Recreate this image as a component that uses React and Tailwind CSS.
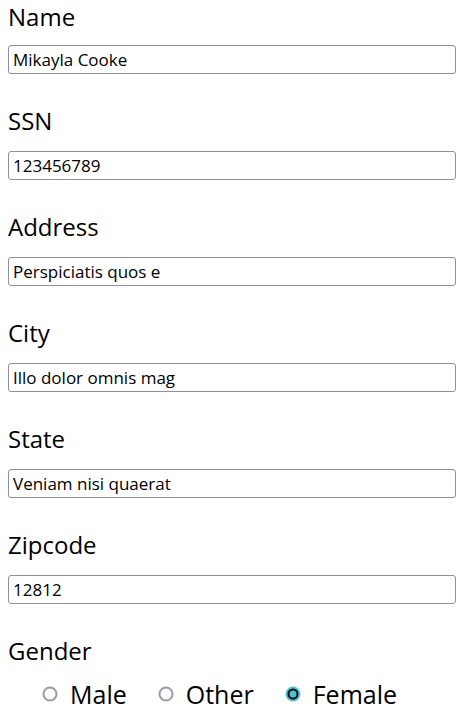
import { useState } from "react";

const fields = [
  { label: "Name", value: "Mikayla Cooke" },
  { label: "SSN", value: "123456789" },
  { label: "Address", value: "Perspiciatis quos e" },
  { label: "City", value: "Illo dolor omnis mag" },
  { label: "State", value: "Veniam nisi quaerat" },
  { label: "Zipcode", value: "12812" },
];

const genders = ["Male", "Other", "Female"];

const Radio = ({ checked }) => (
  <svg width="16" height="16" viewBox="0 0 16 16" className="shrink-0">
    {checked ? (
      <>
        <circle cx="8" cy="8" r="7.5" fill="#4fc0cf" />
        <circle cx="8" cy="8" r="4.5" fill="#4fc0cf" stroke="#111" strokeWidth="2" />
      </>
    ) : (
      <circle cx="8" cy="8" r="6.5" fill="#fff" stroke="#9a98a6" strokeWidth="2" />
    )}
  </svg>
);

const App = () => {
  const [values, setValues] = useState(fields.map((f) => f.value));
  const [gender, setGender] = useState("Female");

  return (
    <div className="min-h-[713px] bg-white px-2 text-black" style={{ fontFamily: '"Open Sans", sans-serif' }}>
      {fields.map((f, i) => (
        <div key={f.label} className="pb-[32px]">
          <label
            className={
              i === 0
                ? "block pb-[12px] text-[24px] leading-[33px]"
                : "block pb-[15px] text-[24px] leading-[30px]"
            }
          >
            {f.label}
          </label>
          <input
            value={values[i]}
            onChange={(e) => {
              const next = [...values];
              next[i] = e.target.value;
              setValues(next);
            }}
            className="block h-[29px] w-[448px] rounded-[3px] border border-[#8f8f9d] px-[4px] text-[17px] outline-none"
          />
        </div>
      ))}
      <div>
        <div className="pb-[13px] text-[24px] leading-[30px]">Gender</div>
        <div className="flex items-center pl-[34px] text-[25px] leading-[30px]">
          {genders.map((g) => (
            <label key={g} className="mr-[31px] flex cursor-pointer items-center gap-[12px]" onClick={() => setGender(g)}>
              <Radio checked={gender === g} />
              <span>{g}</span>
            </label>
          ))}
        </div>
      </div>
    </div>
  );
};

export default App;
